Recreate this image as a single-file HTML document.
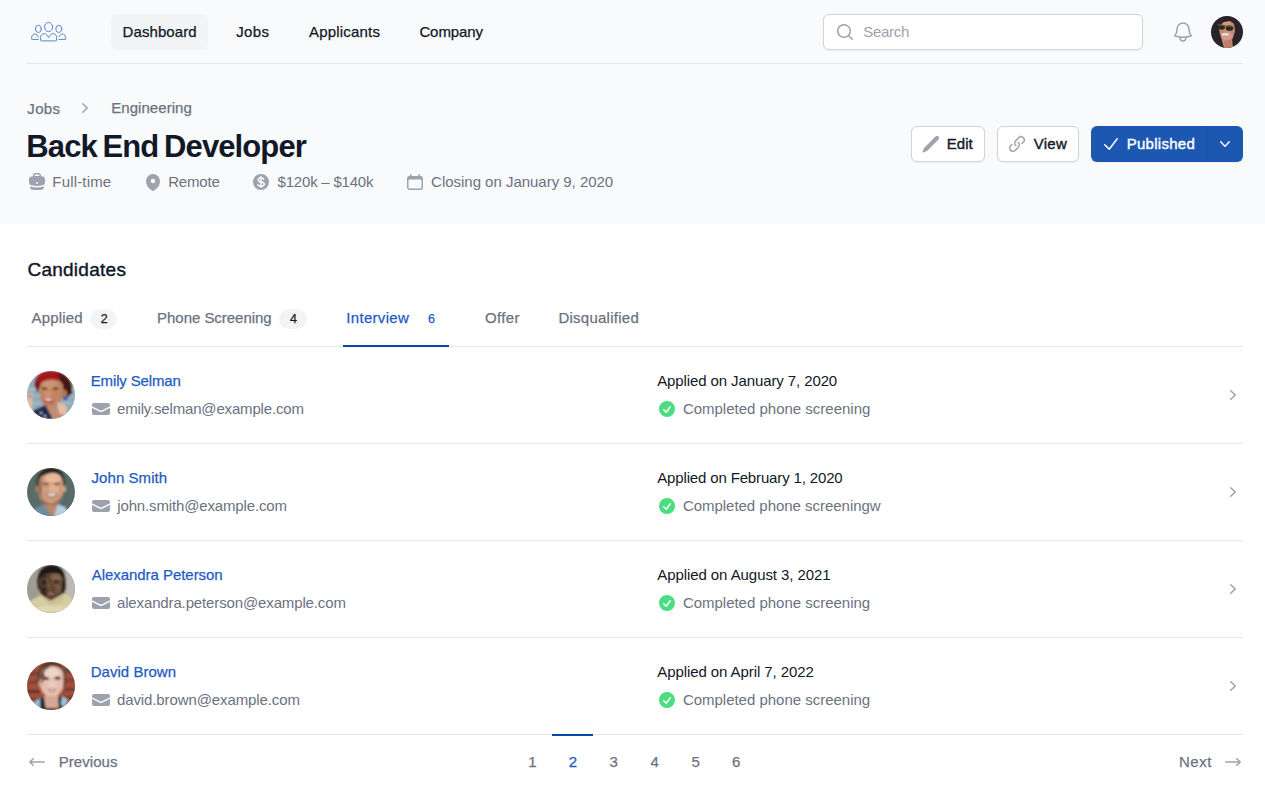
<!DOCTYPE html>
<html lang="en">
<head>
<meta charset="utf-8">
<title>Back End Developer – Candidates</title>
<style>
*{box-sizing:border-box}
html,body{margin:0;padding:0}
body{width:1265px;height:796px;overflow:hidden;background:#fff;font-family:"Liberation Sans",Arial,sans-serif;font-size:14px;position:relative;-webkit-font-smoothing:antialiased}
.a{position:absolute;display:block}
.t{position:absolute;white-space:pre;margin:0;font-weight:400;text-decoration:none}
.m{-webkit-text-stroke:0.25px currentColor}
header{position:absolute;left:0;top:0;width:1265px;height:224px;background:#f9fafb}
.hr{position:absolute;height:1px;background:#e5e7eb}
.pill{position:absolute;border-radius:6px;background:#f3f4f6}
.btn{position:absolute;height:36px;border:1px solid #d1d5db;border-radius:6px;background:#fff;box-shadow:0 1px 2px rgba(0,0,0,.05)}
.badge{position:absolute;height:20px;border-radius:10px;background:#f3f4f6}
.av{position:absolute;border-radius:50%;overflow:hidden}
ul,li,nav,main,section{margin:0;padding:0;list-style:none}
</style>
</head>
<body>

<header>
<nav aria-label="Primary">
<svg class="a" style="left:0;top:0" width="80" height="62" viewBox="0 0 80 62" aria-hidden="true"><g fill="none" stroke="#5487cd" stroke-width="1" stroke-linecap="round" stroke-linejoin="round"><ellipse cx="48.6" cy="27.05" rx="4.05" ry="4.65"/><ellipse cx="38.4" cy="28.9" rx="3" ry="3.6"/><ellipse cx="58.8" cy="28.9" rx="3" ry="3.6"/><path d="M41.1 40.9Q40.6 40.9 40.6 40.4V37.4C40.6 35.2 42.3 33.6 44.3 33.6C45.6 33.6 46.5 34.3 47.2 35.4L48.6 37.5L50 35.4C50.7 34.3 51.6 33.6 52.9 33.6C54.9 33.6 56.6 35.2 56.6 37.4V40.4Q56.6 40.9 56.1 40.9Z"/><path d="M38.4 39.4H32.1Q31.6 39.4 31.6 38.9V37.6C31.6 35.5 33 34 34.9 34C36.4 34 37.5 35 38.2 36.8"/><path d="M58.8 39.4H65.1Q65.600 39.4 65.6 38.9V37.6C65.6 35.5 64.2 34 62.3 34C60.800 34 59.7 35 59 36.8"/></g></svg>

<div class="pill" style="left:111px;top:14px;width:97px;height:36px"></div>
<a class="t m" style="left:122.55px;top:22px;font-size:15px;line-height:20px;color:#111827;letter-spacing:0.09px;">Dashboard</a>
<a class="t m" style="left:236.27px;top:22px;font-size:15px;line-height:20px;color:#111827;letter-spacing:0.358px;">Jobs</a>
<a class="t m" style="left:308.98px;top:22px;font-size:15px;line-height:20px;color:#111827;letter-spacing:0.201px;">Applicants</a>
<a class="t m" style="left:419.39px;top:22px;font-size:15px;line-height:20px;color:#111827;letter-spacing:-0.084px;">Company</a>
<div class="a" style="left:823px;top:14px;width:320px;height:36px;border:1px solid #d1d5db;border-radius:6px;background:#fff;box-shadow:0 1px 2px rgba(0,0,0,.05)"></div>
<svg class="a" style="left:835px;top:22px" width="20" height="20" viewBox="0 0 20 20" aria-hidden="true"><path d="M9 3.5a5.5 5.5 0 100 11 5.5 5.5 0 000-11zM2 9a7 7 0 1112.452 4.391l3.328 3.329a.75.75 0 11-1.06 1.06l-3.329-3.328A7 7 0 012 9z" fill="#9ca3af" fill-rule="evenodd" clip-rule="evenodd"/></svg>
<span class="t" style="left:863.16px;top:22px;font-size:15px;line-height:20px;color:#9ca3af;letter-spacing:-0.279px;">Search</span>
<svg class="a" style="left:1171px;top:20px" width="24" height="24" viewBox="0 0 24 24" aria-hidden="true"><path d="M14.857 17.082a23.848 23.848 0 005.454-1.31A8.967 8.967 0 0118 9.75v-.7V9A6 6 0 006 9v.75a8.967 8.967 0 01-2.312 6.022c1.733.64 3.56 1.085 5.455 1.31m5.714 0a24.255 24.255 0 01-5.714 0m5.714 0a3 3 0 11-5.714 0" fill="none" stroke="#9ca3af" stroke-width="1.5" stroke-linecap="round" stroke-linejoin="round"/></svg>
<svg class="av" style="left:1211px;top:16px" width="32" height="32" viewBox="0 0 32 32" role="img" aria-label="Account"><defs><filter id="b4" x="-10%" y="-10%" width="120%" height="120%"><feGaussianBlur stdDeviation="0.55"/></filter></defs><rect width="32" height="32" fill="#2a2428"/><g filter="url(#b4)"><path d="M8 9L12 4L20 4L24 9L24 19L20 25L21 32L13 32L11 25L8 18Z" fill="#c58a76"/><ellipse cx="16" cy="20" rx="5.500" ry="4.500" fill="#d29c88"/><ellipse cx="15" cy="7" rx="4" ry="2" fill="#cf9a86"/><path d="M10 2L21 2L25 9L19 5L13 6L8 10Z" fill="#2a2428"/><path d="M23 7L27 14L25 26L22 22L24 15Z" fill="#2a2428"/><path d="M7 10L9 18L11 25L8 26L5 16Z" fill="#2a2428"/><ellipse cx="10.500" cy="11.200" rx="3.500" ry="2.500" fill="#2d2a1f"/><ellipse cx="18.500" cy="12.200" rx="3.700" ry="2.600" fill="#2d2a1f"/><path d="M6.500 8.800L22.500 10.500" stroke="#77633a" stroke-width="0.8"/><ellipse cx="14.300" cy="18.400" rx="3.600" ry="1.100" fill="#f1e7e1"/><path d="M13 25L21 23L22 32L14 32Z" fill="#c07f6c"/></g></svg>

</nav>
<div class="hr" style="left:27px;top:63px;width:1216px"></div>
<a class="t m" style="left:27.37px;top:99px;font-size:15px;line-height:20px;color:#6b7280;letter-spacing:0.291px;">Jobs</a>
<svg class="a" style="left:75px;top:98px" width="20" height="20" viewBox="0 0 20 20" aria-hidden="true"><path d="M7.21 14.77a.75.75 0 01.02-1.06L11.168 10 7.23 6.29a.75.75 0 111.04-1.08l4.5 4.25a.75.75 0 010 1.08l-4.5 4.25a.75.75 0 01-1.06-.02z" fill="#9ca3af" fill-rule="evenodd" clip-rule="evenodd"/></svg>
<a class="t m" style="left:111.25px;top:98px;font-size:15px;line-height:20px;color:#6b7280;letter-spacing:0.052px;">Engineering</a>
<h1 class="t" style="left:26.37px;top:129px;font-size:31px;line-height:36px;color:#111827;letter-spacing:-0.903px;font-weight:700;word-spacing:-2px;">Back End Developer</h1>
<svg class="a" style="left:27px;top:172px" width="20" height="20" viewBox="0 0 20 20" aria-hidden="true"><path d="M6 3.75A2.75 2.75 0 018.75 1h2.5A2.75 2.75 0 0114 3.75v.443c.572.055 1.14.122 1.706.2C17.053 4.582 18 5.75 18 7.07v3.469c0 1.126-.694 2.191-1.83 2.54-1.952.599-4.024.921-6.17.921s-4.219-.322-6.17-.921C2.694 12.73 2 11.665 2 10.539V7.07c0-1.321.947-2.489 2.294-2.676A41.047 41.047 0 016 4.193V3.75zm6.5 0v.325a41.622 41.622 0 00-5 0V3.75c0-.69.56-1.25 1.25-1.25h2.5c.69 0 1.25.56 1.25 1.25zM10 10a1 1 0 00-1 1v.01a1 1 0 001 1h.01a1 1 0 001-1V11a1 1 0 00-1-1H10z" fill="#9ca3af" fill-rule="evenodd" clip-rule="evenodd"/><path d="M3 15.055v-.684c.126.053.255.1.39.142 2.092.642 4.313.987 6.61.987 2.297 0 4.518-.345 6.61-.987.135-.041.264-.089.39-.142v.684c0 1.347-.985 2.53-2.363 2.686a41.454 41.454 0 01-9.274 0C3.985 17.585 3 16.402 3 15.055z" fill="#9ca3af" fill-rule="evenodd" clip-rule="evenodd"/></svg>
<span class="t" style="left:52.35px;top:172px;font-size:15px;line-height:20px;color:#6b7280;letter-spacing:0.164px;">Full-time</span>
<svg class="a" style="left:143px;top:172px" width="20" height="20" viewBox="0 0 20 20" aria-hidden="true"><path d="M9.69 18.933l.003.001C9.89 19.02 10 19 10 19s.11.02.308-.066l.002-.001.006-.003.018-.008a5.741 5.741 0 00.281-.14c.186-.096.446-.24.757-.433.62-.384 1.445-.966 2.274-1.765C15.302 14.988 17 12.493 17 9A7 7 0 103 9c0 3.492 1.698 5.988 3.355 7.584a13.731 13.731 0 002.273 1.765 11.842 11.842 0 00.976.544l.062.029.018.008.006.003zM10 11.25a2.25 2.25 0 100-4.5 2.25 2.25 0 000 4.5z" fill="#9ca3af" fill-rule="evenodd" clip-rule="evenodd"/></svg>
<span class="t" style="left:168.15px;top:172px;font-size:15px;line-height:20px;color:#6b7280;letter-spacing:-0.157px;">Remote</span>
<svg class="a" style="left:251px;top:172px" width="20" height="20" viewBox="0 0 20 20" aria-hidden="true"><path d="M10.75 10.818v2.614A3.13 3.13 0 0011.888 13c.482-.315.612-.648.612-.875 0-.227-.13-.56-.612-.875a3.13 3.13 0 00-1.138-.432zM8.33 8.62c.053.055.115.11.184.164.208.16.46.284.736.363V6.603a2.45 2.45 0 00-.35.13c-.14.065-.27.143-.386.233-.377.292-.514.627-.514.909 0 .184.058.39.202.592.037.051.08.102.128.152z" fill="#9ca3af" fill-rule="evenodd" clip-rule="evenodd"/><path d="M18 10a8 8 0 11-16 0 8 8 0 0116 0zm-8-6a.75.75 0 01.75.75v.316a3.78 3.78 0 011.653.713c.426.33.744.74.925 1.2a.75.75 0 01-1.395.55 1.35 1.35 0 00-.447-.563 2.187 2.187 0 00-.736-.363V9.3c.698.093 1.383.32 1.959.696.787.514 1.29 1.27 1.29 2.13 0 .86-.504 1.616-1.29 2.13-.576.377-1.261.603-1.96.696v.299a.75.75 0 11-1.5 0v-.3c-.697-.092-1.382-.318-1.958-.695-.482-.315-.857-.717-1.078-1.188a.75.75 0 111.359-.636c.08.173.245.376.54.569.313.205.706.353 1.138.432v-2.748a3.782 3.782 0 01-1.653-.713C6.9 9.433 6.5 8.681 6.5 7.875c0-.805.4-1.558 1.097-2.096a3.78 3.78 0 011.653-.713V4.75A.75.75 0 0110 4z" fill="#9ca3af" fill-rule="evenodd" clip-rule="evenodd"/></svg>
<span class="t" style="left:277.62px;top:172px;font-size:15px;line-height:20px;color:#6b7280;letter-spacing:-0.212px;">$120k – $140k</span>
<svg class="a" style="left:405px;top:172px" width="20" height="20" viewBox="0 0 20 20" aria-hidden="true"><path d="M5.75 2a.75.75 0 01.75.75V4h7V2.75a.75.75 0 011.5 0V4h.25A2.75 2.75 0 0118 6.75v8.5A2.75 2.75 0 0115.25 18H4.75A2.75 2.75 0 012 15.25v-8.5A2.75 2.75 0 014.75 4H5V2.75A.75.75 0 015.75 2zm-1 5.5c-.69 0-1.25.56-1.25 1.25v6.5c0 .69.56 1.25 1.25 1.25h10.5c.69 0 1.25-.56 1.25-1.25v-6.5c0-.69-.56-1.25-1.25-1.25H4.75z" fill="#9ca3af" fill-rule="evenodd" clip-rule="evenodd"/></svg>
<span class="t" style="left:431.08px;top:172px;font-size:15px;line-height:20px;color:#6b7280;letter-spacing:-0.02px;">Closing on January 9, 2020</span>
<div class="btn" style="left:911px;top:126px;width:74px"></div>
<svg class="a" style="left:921px;top:134px" width="20" height="20" viewBox="0 0 20 20" aria-hidden="true"><path d="M2.695 14.763l-1.262 3.154a.5.5 0 00.65.65l3.155-1.262a4 4 0 001.343-.885L17.5 5.5a2.121 2.121 0 00-3-3L3.58 13.42a4 4 0 00-.885 1.343z" fill="#9ca3af" fill-rule="evenodd" clip-rule="evenodd"/></svg>
<span class="t m" style="left:946.79px;top:134px;font-size:15px;line-height:20px;color:#141b2b;letter-spacing:0.022px;-webkit-text-stroke-width:0.4px;">Edit</span>
<div class="btn" style="left:997px;top:126px;width:82px"></div>
<svg class="a" style="left:1007px;top:134px" width="20" height="20" viewBox="0 0 20 20" aria-hidden="true"><path d="M12.232 4.232a2.5 2.5 0 013.536 3.536l-1.225 1.224a.75.75 0 001.061 1.06l1.224-1.224a4 4 0 00-5.656-5.656l-3 3a4 4 0 00.225 5.865.75.75 0 00.977-1.138 2.5 2.5 0 01-.142-3.667l3-3z" fill="#9ca3af" fill-rule="evenodd" clip-rule="evenodd"/><path d="M11.603 7.963a.75.75 0 00-.977 1.138 2.5 2.5 0 01.142 3.667l-3 3a2.5 2.5 0 01-3.536-3.536l1.225-1.224a.75.75 0 00-1.061-1.06l-1.224 1.224a4 4 0 105.656 5.656l3-3a4 4 0 00-.225-5.865z" fill="#9ca3af" fill-rule="evenodd" clip-rule="evenodd"/></svg>
<span class="t m" style="left:1033.76px;top:134px;font-size:15px;line-height:20px;color:#141b2b;letter-spacing:0.241px;-webkit-text-stroke-width:0.4px;">View</span>
<div class="a" style="left:1091px;top:126px;width:152px;height:36px;border-radius:6px;background:#1c57b1;box-shadow:0 1px 2px rgba(0,0,0,.05)"></div>
<div class="a" style="left:1206px;top:126px;width:1px;height:36px;background:#1a53aa"></div>
<svg class="a" style="left:1101px;top:134px" width="20" height="20" viewBox="0 0 20 20" aria-hidden="true"><path d="M16.704 4.153a.75.75 0 01.143 1.052l-8 10.5a.75.75 0 01-1.127.075l-4.5-4.5a.75.75 0 011.06-1.06l3.894 3.893 7.48-9.817a.75.75 0 011.05-.143z" fill="#ffffff" fill-rule="evenodd" clip-rule="evenodd"/></svg>
<span class="t m" style="left:1126.69px;top:134px;font-size:15px;line-height:20px;color:#ffffff;letter-spacing:0.277px;-webkit-text-stroke-width:0.4px;">Published</span>
<svg class="a" style="left:1215px;top:134px" width="20" height="20" viewBox="0 0 20 20" aria-hidden="true"><path d="M5.23 7.21a.75.75 0 011.06.02L10 11.168l3.71-3.938a.75.75 0 111.08 1.04l-4.25 4.5a.75.75 0 01-1.08 0l-4.25-4.5a.75.75 0 01.02-1.06z" fill="#ffffff" fill-rule="evenodd" clip-rule="evenodd"/></svg>
</header>
<main>
<h2 class="t m" style="left:27.4px;top:256px;font-size:19px;line-height:28px;color:#111827;letter-spacing:0.264px;-webkit-text-stroke-width:0.4px;">Candidates</h2>
<div class="hr" style="left:27px;top:346px;width:1216px"></div>
<a class="t m" style="left:31.48px;top:308px;font-size:15px;line-height:20px;color:#6b7280;letter-spacing:0.168px;">Applied</a>
<div class="badge" style="left:90px;top:309px;width:27px"></div>
<span class="t m" style="left:100.74px;top:311px;font-size:12.5px;line-height:16px;color:#111827;">2</span>
<a class="t m" style="left:157.05px;top:308px;font-size:15px;line-height:20px;color:#6b7280;letter-spacing:-0.034px;">Phone Screening</a>
<div class="badge" style="left:279px;top:309px;width:28px"></div>
<span class="t m" style="left:289.94px;top:311px;font-size:12.5px;line-height:16px;color:#111827;">4</span>
<a class="t m" style="left:346.24px;top:308px;font-size:15px;line-height:20px;color:#1d5bc2;letter-spacing:0.323px;">Interview</a>
<span class="t m" style="left:427.9px;top:311px;font-size:12.5px;line-height:16px;color:#1d5bc2;">6</span>
<div class="a" style="left:343px;top:345px;width:106px;height:2px;background:#0647a6"></div>
<a class="t m" style="left:484.93px;top:308px;font-size:15px;line-height:20px;color:#6b7280;letter-spacing:0.368px;">Offer</a>
<a class="t m" style="left:558.45px;top:308px;font-size:15px;line-height:20px;color:#6b7280;letter-spacing:0.249px;">Disqualified</a>
<ul>
<li>
<svg class="av" style="left:27px;top:371px" width="48" height="48" viewBox="0 0 48 48" role="img" aria-label="Emily Selman"><defs><filter id="b0" x="-10%" y="-10%" width="120%" height="120%"><feGaussianBlur stdDeviation="0.8"/></filter></defs><rect width="48" height="48" fill="#8eabb8"/><g filter="url(#b0)"><rect x="-2" y="17" width="52" height="2.5" fill="#a7c0ca"/><rect x="-2" y="24" width="52" height="2" fill="#9db8c3"/><rect x="-2" y="31" width="52" height="2" fill="#a2bcc6"/><path d="M8 15C7 4 16 -1 25 0C36 0 45 6 45 20L40 26L30 16L14 14L11 20Z" fill="#a5141b"/><path d="M30 2C40 4 46 12 45 22L40 27L36 18L33 8Z" fill="#3d1519"/><path d="M9 10C7 15 9 19 11 22L14 12Z" fill="#7d1519"/><path d="M13 15C13 7 35 6 36 15L36 24C35 32 29 37 24 37C18 37 13 31 13 24Z" fill="#bf8463"/><ellipse cx="23" cy="13.5" rx="8" ry="4" fill="#cc9573"/><ellipse cx="21" cy="23" rx="4" ry="4" fill="#ca9270"/><ellipse cx="37.5" cy="23" rx="2.6" ry="4.5" fill="#b07658"/><path d="M36.6 25.5l3 0 .3 3.6-3.3 0z" fill="#2848c4"/><ellipse cx="17.5" cy="17.5" rx="3" ry="1.1" fill="#3f241c"/><ellipse cx="28.5" cy="17.5" rx="3" ry="1.1" fill="#3f241c"/><ellipse cx="21.5" cy="29.4" rx="5" ry="2.6" fill="#b5433e"/><ellipse cx="21.3" cy="28.6" rx="3.8" ry="1.1" fill="#f3e6de"/><path d="M4 48L6 40L19 34L26 48Z" fill="#1b2c52"/><circle cx="14" cy="42" r="1" fill="#dfe6f0"/><circle cx="18" cy="45" r="1" fill="#dfe6f0"/><path d="M19 35L28 37L36 36L40 48L26 48Z" fill="#c48c6d"/><path d="M30 31L40 35L39 45L32 42Z" fill="#e6bea8"/><path d="M0 23L5 21L6 38L0 36Z" fill="#e2b8a2"/><circle cx="3" cy="25.5" r="1" fill="#2a3c9a"/></g></svg>

<a class="t m" style="left:90.75px;top:371px;font-size:15px;line-height:20px;color:#1d5bc2;letter-spacing:-0.141px;">Emily Selman</a>
<svg class="a" style="left:91px;top:399px" width="20" height="20" viewBox="0 0 20 20" aria-hidden="true"><path d="M3 4a2 2 0 00-2 2v1.161l8.441 4.221a1.25 1.25 0 001.118 0L19 7.162V6a2 2 0 00-2-2H3z" fill="#9ca3af" fill-rule="evenodd" clip-rule="evenodd"/><path d="M19 8.839l-7.77 3.885a2.75 2.75 0 01-2.46 0L1 8.839V14a2 2 0 002 2h14a2 2 0 002-2V8.839z" fill="#9ca3af" fill-rule="evenodd" clip-rule="evenodd"/></svg>
<span class="t" style="left:116.97px;top:399px;font-size:15px;line-height:20px;color:#6b7280;letter-spacing:-0.169px;">emily.selman@example.com</span>
<span class="t" style="left:657.23px;top:371px;font-size:15px;line-height:20px;color:#111827;letter-spacing:-0.106px;">Applied on January 7, 2020</span>
<svg class="a" style="left:657px;top:399px" width="20" height="20" viewBox="0 0 20 20" aria-hidden="true"><path d="M10 18a8 8 0 100-16 8 8 0 000 16zm3.857-9.809a.75.75 0 00-1.214-.882l-3.483 4.79-1.88-1.88a.75.75 0 10-1.06 1.061l2.5 2.5a.75.75 0 001.137-.089l4-5.5z" fill="#4ade80" fill-rule="evenodd" clip-rule="evenodd"/></svg>
<span class="t" style="left:682.88px;top:399px;font-size:15px;line-height:20px;color:#6b7280;letter-spacing:-0.008px;">Completed phone screening</span>
<svg class="a" style="left:1223px;top:385px" width="20" height="20" viewBox="0 0 20 20" aria-hidden="true"><path d="M7.21 14.77a.75.75 0 01.02-1.06L11.168 10 7.23 6.29a.75.75 0 111.04-1.08l4.5 4.25a.75.75 0 010 1.08l-4.5 4.25a.75.75 0 01-1.06-.02z" fill="#9ca3af" fill-rule="evenodd" clip-rule="evenodd"/></svg>
<div class="hr" style="left:27px;top:443px;width:1216px"></div>
</li>
<li>
<svg class="av" style="left:27px;top:468px" width="48" height="48" viewBox="0 0 48 48" role="img" aria-label="John Smith"><defs><filter id="b1" x="-10%" y="-10%" width="120%" height="120%"><feGaussianBlur stdDeviation="0.8"/></filter></defs><rect width="48" height="48" fill="#596b67"/><g filter="url(#b1)"><path d="M9.500 22C8 4 18 0 24 0C32 0 39 4 37.500 22Z" fill="#25221f"/><path d="M11.500 15C12 7 20 5.500 24.500 5.500C30 5.500 36 8 36 15L36 25C35 33 29 38.500 24 38.500C18 38.500 12 32 11.500 25Z" fill="#cf9c7b"/><ellipse cx="26" cy="10" rx="8" ry="5" fill="#e6bb9c"/><ellipse cx="27" cy="21" rx="5" ry="5" fill="#e0b191"/><path d="M11.500 14L15 10L15 30L12 26Z" fill="#9a6f55"/><ellipse cx="10" cy="21" rx="1.800" ry="3.500" fill="#a97c60"/><ellipse cx="37.300" cy="21" rx="1.500" ry="3.500" fill="#d8aa8c"/><ellipse cx="18.500" cy="16" rx="3" ry="1.100" fill="#4a3428"/><ellipse cx="30" cy="16" rx="3" ry="1.100" fill="#4a3428"/><path d="M13 27Q24 44 35 27Q33 38.500 24 38.500Q15 38.500 13 27Z" fill="#9c7158"/><ellipse cx="24.500" cy="27" rx="5.600" ry="2.300" fill="#9a5a4a"/><ellipse cx="24.500" cy="26.700" rx="4.400" ry="1.200" fill="#f3ebe4"/><path d="M17 37L31 37L30 48L20 48Z" fill="#b98869"/><path d="M4 48L8 40L17 36L25 48Z" fill="#6f8b9d"/><path d="M27 48L31 36L38 39L44 48Z" fill="#b7cfe2"/></g></svg>

<a class="t m" style="left:91.57px;top:468px;font-size:15px;line-height:20px;color:#1d5bc2;letter-spacing:0.057px;">John Smith</a>
<svg class="a" style="left:91px;top:496px" width="20" height="20" viewBox="0 0 20 20" aria-hidden="true"><path d="M3 4a2 2 0 00-2 2v1.161l8.441 4.221a1.25 1.25 0 001.118 0L19 7.162V6a2 2 0 00-2-2H3z" fill="#9ca3af" fill-rule="evenodd" clip-rule="evenodd"/><path d="M19 8.839l-7.77 3.885a2.75 2.75 0 01-2.46 0L1 8.839V14a2 2 0 002 2h14a2 2 0 002-2V8.839z" fill="#9ca3af" fill-rule="evenodd" clip-rule="evenodd"/></svg>
<span class="t" style="left:117.29px;top:496px;font-size:15px;line-height:20px;color:#6b7280;letter-spacing:-0.148px;">john.smith@example.com</span>
<span class="t" style="left:657.23px;top:468px;font-size:15px;line-height:20px;color:#111827;letter-spacing:-0.148px;">Applied on February 1, 2020</span>
<svg class="a" style="left:657px;top:496px" width="20" height="20" viewBox="0 0 20 20" aria-hidden="true"><path d="M10 18a8 8 0 100-16 8 8 0 000 16zm3.857-9.809a.75.75 0 00-1.214-.882l-3.483 4.79-1.88-1.88a.75.75 0 10-1.06 1.061l2.5 2.5a.75.75 0 001.137-.089l4-5.5z" fill="#4ade80" fill-rule="evenodd" clip-rule="evenodd"/></svg>
<span class="t" style="left:682.88px;top:496px;font-size:15px;line-height:20px;color:#6b7280;letter-spacing:-0.027px;">Completed phone screeningw</span>
<svg class="a" style="left:1223px;top:482px" width="20" height="20" viewBox="0 0 20 20" aria-hidden="true"><path d="M7.21 14.77a.75.75 0 01.02-1.06L11.168 10 7.23 6.29a.75.75 0 111.04-1.08l4.5 4.25a.75.75 0 010 1.08l-4.5 4.25a.75.75 0 01-1.06-.02z" fill="#9ca3af" fill-rule="evenodd" clip-rule="evenodd"/></svg>
<div class="hr" style="left:27px;top:540px;width:1216px"></div>
</li>
<li>
<svg class="av" style="left:27px;top:565px" width="48" height="48" viewBox="0 0 48 48" role="img" aria-label="Alexandra Peterson"><defs><filter id="b2" x="-10%" y="-10%" width="120%" height="120%"><feGaussianBlur stdDeviation="0.8"/></filter></defs><rect width="48" height="48" fill="#a39e95"/><g filter="url(#b2)"><rect x="32" y="0" width="16" height="32" fill="#bdb8b1"/><rect x="0" y="20" width="12" height="20" fill="#a09b92"/><path d="M10.500 22C9 4 18 0 25 0C34 0 40 5 39 24L36 30L12 26Z" fill="#1b1814"/><path d="M12.500 15C13 9.500 20 8 25 8C31 8 36 10.500 36 16L35.500 24C35 31 30 35.500 25 35.500C19 35.500 13 31 12.500 24Z" fill="#5b3f2f"/><path d="M12.500 12L19 9L20 34L14 29Z" fill="#3a271d"/><ellipse cx="29" cy="12" rx="5.500" ry="3.500" fill="#80604a"/><ellipse cx="31" cy="24" rx="3.500" ry="5" fill="#75543f"/><ellipse cx="22.500" cy="22" rx="2" ry="4" fill="#6e4d3a"/><circle cx="17" cy="17.500" r="4" fill="none" stroke="#8f8670" stroke-width="0.55"/><circle cx="29.500" cy="16.500" r="4.400" fill="none" stroke="#8f8670" stroke-width="0.55"/><path d="M34 15L39 12" stroke="#8f8670" stroke-width="0.55"/><ellipse cx="17" cy="17.500" rx="2" ry="1" fill="#2a1c15"/><ellipse cx="29.500" cy="16.500" rx="2" ry="1" fill="#2a1c15"/><ellipse cx="24" cy="28.500" rx="3.600" ry="1.600" fill="#8f6a5c"/><path d="M30 32L36 24L39 30L35 36Z" fill="#241912"/><path d="M0 48L2 37L14 30L24 36L37 28L47 34L48 48Z" fill="#d6cea2"/><path d="M14 30L24 36L37 28L36 37L22 41Z" fill="#c9c092"/><path d="M6 44L20 40L40 42L44 48L4 48Z" fill="#ded7b2"/></g></svg>

<a class="t m" style="left:91.68px;top:565px;font-size:15px;line-height:20px;color:#1d5bc2;letter-spacing:-0.042px;">Alexandra Peterson</a>
<svg class="a" style="left:91px;top:593px" width="20" height="20" viewBox="0 0 20 20" aria-hidden="true"><path d="M3 4a2 2 0 00-2 2v1.161l8.441 4.221a1.25 1.25 0 001.118 0L19 7.162V6a2 2 0 00-2-2H3z" fill="#9ca3af" fill-rule="evenodd" clip-rule="evenodd"/><path d="M19 8.839l-7.77 3.885a2.75 2.75 0 01-2.46 0L1 8.839V14a2 2 0 002 2h14a2 2 0 002-2V8.839z" fill="#9ca3af" fill-rule="evenodd" clip-rule="evenodd"/></svg>
<span class="t" style="left:116.94px;top:593px;font-size:15px;line-height:20px;color:#6b7280;letter-spacing:-0.133px;">alexandra.peterson@example.com</span>
<span class="t" style="left:657.23px;top:565px;font-size:15px;line-height:20px;color:#111827;letter-spacing:-0.072px;">Applied on August 3, 2021</span>
<svg class="a" style="left:657px;top:593px" width="20" height="20" viewBox="0 0 20 20" aria-hidden="true"><path d="M10 18a8 8 0 100-16 8 8 0 000 16zm3.857-9.809a.75.75 0 00-1.214-.882l-3.483 4.79-1.88-1.88a.75.75 0 10-1.06 1.061l2.5 2.5a.75.75 0 001.137-.089l4-5.5z" fill="#4ade80" fill-rule="evenodd" clip-rule="evenodd"/></svg>
<span class="t" style="left:682.88px;top:593px;font-size:15px;line-height:20px;color:#6b7280;letter-spacing:-0.016px;">Completed phone screening</span>
<svg class="a" style="left:1223px;top:579px" width="20" height="20" viewBox="0 0 20 20" aria-hidden="true"><path d="M7.21 14.77a.75.75 0 01.02-1.06L11.168 10 7.23 6.29a.75.75 0 111.04-1.08l4.5 4.25a.75.75 0 010 1.08l-4.5 4.25a.75.75 0 01-1.06-.02z" fill="#9ca3af" fill-rule="evenodd" clip-rule="evenodd"/></svg>
<div class="hr" style="left:27px;top:637px;width:1216px"></div>
</li>
<li>
<svg class="av" style="left:27px;top:662px" width="48" height="48" viewBox="0 0 48 48" role="img" aria-label="David Brown"><defs><filter id="b3" x="-10%" y="-10%" width="120%" height="120%"><feGaussianBlur stdDeviation="0.8"/></filter></defs><rect width="48" height="48" fill="#a24e39"/><g filter="url(#b3)"><rect x="0" y="10" width="12" height="3" fill="#6a4034"/><rect x="0" y="19" width="12" height="3" fill="#7a4537"/><rect x="0" y="28" width="13" height="3" fill="#5e382e"/><rect x="0" y="36" width="12" height="2.500" fill="#7a4537"/><rect x="38" y="6" width="10" height="5" fill="#5a4a44"/><rect x="38" y="17" width="10" height="3" fill="#7a4537"/><rect x="37" y="26" width="11" height="3" fill="#71402f"/><rect x="38" y="34" width="10" height="3" fill="#6a3c30"/><path d="M11 24C9 5 17 0 24 0C32 0 40 4 38 25Z" fill="#553629"/><path d="M13 14C13 7 20 4 25 4C31 4 36.500 7 36.500 14L36.500 23C36 30 30 35.500 25 35.500C19 35.500 13.500 30 13 23Z" fill="#e4beae"/><path d="M13 14C14 8 19 5 23 4L19 10L15 22Z" fill="#6a483a"/><ellipse cx="25" cy="11" rx="8" ry="5" fill="#efd3c7"/><ellipse cx="25" cy="23" rx="5" ry="4" fill="#ecccbe"/><ellipse cx="12.800" cy="22" rx="1.500" ry="3" fill="#cf9f8e"/><ellipse cx="19" cy="16.500" rx="3" ry="1.500" fill="#35282a"/><ellipse cx="30.500" cy="16" rx="3" ry="1.500" fill="#35282a"/><ellipse cx="25" cy="27.800" rx="3.800" ry="1.800" fill="#c4776b"/><ellipse cx="25" cy="27.500" rx="2.400" ry=".700" fill="#f0dcd4"/><path d="M17 34L32 34L33 48L16 48Z" fill="#d6a795"/><path d="M11 48L13 36L17 35L19 48Z" fill="#2a2c33"/><path d="M31 35L35 34L37 44L32 48Z" fill="#2a2c33"/><path d="M3 48L6 41L13 36L13 48Z" fill="#8dbfdc"/><path d="M35 34L41 38L37 46L34 42Z" fill="#9cc9e2"/><path d="M17 46L33 46L33 48L17 48Z" fill="#1f2025"/></g></svg>

<a class="t m" style="left:90.75px;top:662px;font-size:15px;line-height:20px;color:#1d5bc2;letter-spacing:0.023px;">David Brown</a>
<svg class="a" style="left:91px;top:690px" width="20" height="20" viewBox="0 0 20 20" aria-hidden="true"><path d="M3 4a2 2 0 00-2 2v1.161l8.441 4.221a1.25 1.25 0 001.118 0L19 7.162V6a2 2 0 00-2-2H3z" fill="#9ca3af" fill-rule="evenodd" clip-rule="evenodd"/><path d="M19 8.839l-7.77 3.885a2.75 2.75 0 01-2.46 0L1 8.839V14a2 2 0 002 2h14a2 2 0 002-2V8.839z" fill="#9ca3af" fill-rule="evenodd" clip-rule="evenodd"/></svg>
<span class="t" style="left:116.97px;top:690px;font-size:15px;line-height:20px;color:#6b7280;letter-spacing:-0.104px;">david.brown@example.com</span>
<span class="t" style="left:657.23px;top:662px;font-size:15px;line-height:20px;color:#111827;letter-spacing:-0.08px;">Applied on April 7, 2022</span>
<svg class="a" style="left:657px;top:690px" width="20" height="20" viewBox="0 0 20 20" aria-hidden="true"><path d="M10 18a8 8 0 100-16 8 8 0 000 16zm3.857-9.809a.75.75 0 00-1.214-.882l-3.483 4.79-1.88-1.88a.75.75 0 10-1.06 1.061l2.5 2.5a.75.75 0 001.137-.089l4-5.5z" fill="#4ade80" fill-rule="evenodd" clip-rule="evenodd"/></svg>
<span class="t" style="left:682.88px;top:690px;font-size:15px;line-height:20px;color:#6b7280;letter-spacing:-0.016px;">Completed phone screening</span>
<svg class="a" style="left:1223px;top:676px" width="20" height="20" viewBox="0 0 20 20" aria-hidden="true"><path d="M7.21 14.77a.75.75 0 01.02-1.06L11.168 10 7.23 6.29a.75.75 0 111.04-1.08l4.5 4.25a.75.75 0 010 1.08l-4.5 4.25a.75.75 0 01-1.06-.02z" fill="#9ca3af" fill-rule="evenodd" clip-rule="evenodd"/></svg>
<div class="hr" style="left:27px;top:734px;width:1216px"></div>
</li>
</ul>
<nav aria-label="Pagination">
<svg class="a" style="left:27px;top:752px" width="20" height="20" viewBox="0 0 20 20" aria-hidden="true"><path d="M18 10a.75.75 0 01-.75.75H4.66l2.1 1.95a.75.75 0 11-1.02 1.1l-3.5-3.25a.75.75 0 010-1.1l3.5-3.25a.75.75 0 111.02 1.1l-2.1 1.95h12.59A.75.75 0 0118 10z" fill="#9ca3af" fill-rule="evenodd" clip-rule="evenodd"/></svg>
<a class="t m" style="left:58.75px;top:752px;font-size:15px;line-height:20px;color:#6b7280;letter-spacing:0.048px;">Previous</a>
<div class="a" style="left:552px;top:734px;width:41px;height:2px;background:#0647a6"></div>
<a class="t m" style="left:528.2px;top:752px;font-size:15px;line-height:20px;color:#6b7280;">1</a>
<a class="t m" style="left:568.77px;top:752px;font-size:15px;line-height:20px;color:#1d5bc2;">2</a>
<a class="t m" style="left:609.49px;top:752px;font-size:15px;line-height:20px;color:#6b7280;">3</a>
<a class="t m" style="left:650.39px;top:752px;font-size:15px;line-height:20px;color:#6b7280;">4</a>
<a class="t m" style="left:691.58px;top:752px;font-size:15px;line-height:20px;color:#6b7280;">5</a>
<a class="t m" style="left:732.08px;top:752px;font-size:15px;line-height:20px;color:#6b7280;">6</a>
<a class="t m" style="left:1179.05px;top:752px;font-size:15px;line-height:20px;color:#6b7280;letter-spacing:0.48px;">Next</a>
<svg class="a" style="left:1223px;top:752px" width="20" height="20" viewBox="0 0 20 20" aria-hidden="true"><path d="M2 10a.75.75 0 01.75-.75h12.59l-2.1-1.95a.75.75 0 111.02-1.1l3.5 3.25a.75.75 0 010 1.1l-3.5 3.25a.75.75 0 11-1.02-1.1l2.1-1.95H2.75A.75.75 0 012 10z" fill="#9ca3af" fill-rule="evenodd" clip-rule="evenodd"/></svg>
</nav>
</main>
</body></html>
